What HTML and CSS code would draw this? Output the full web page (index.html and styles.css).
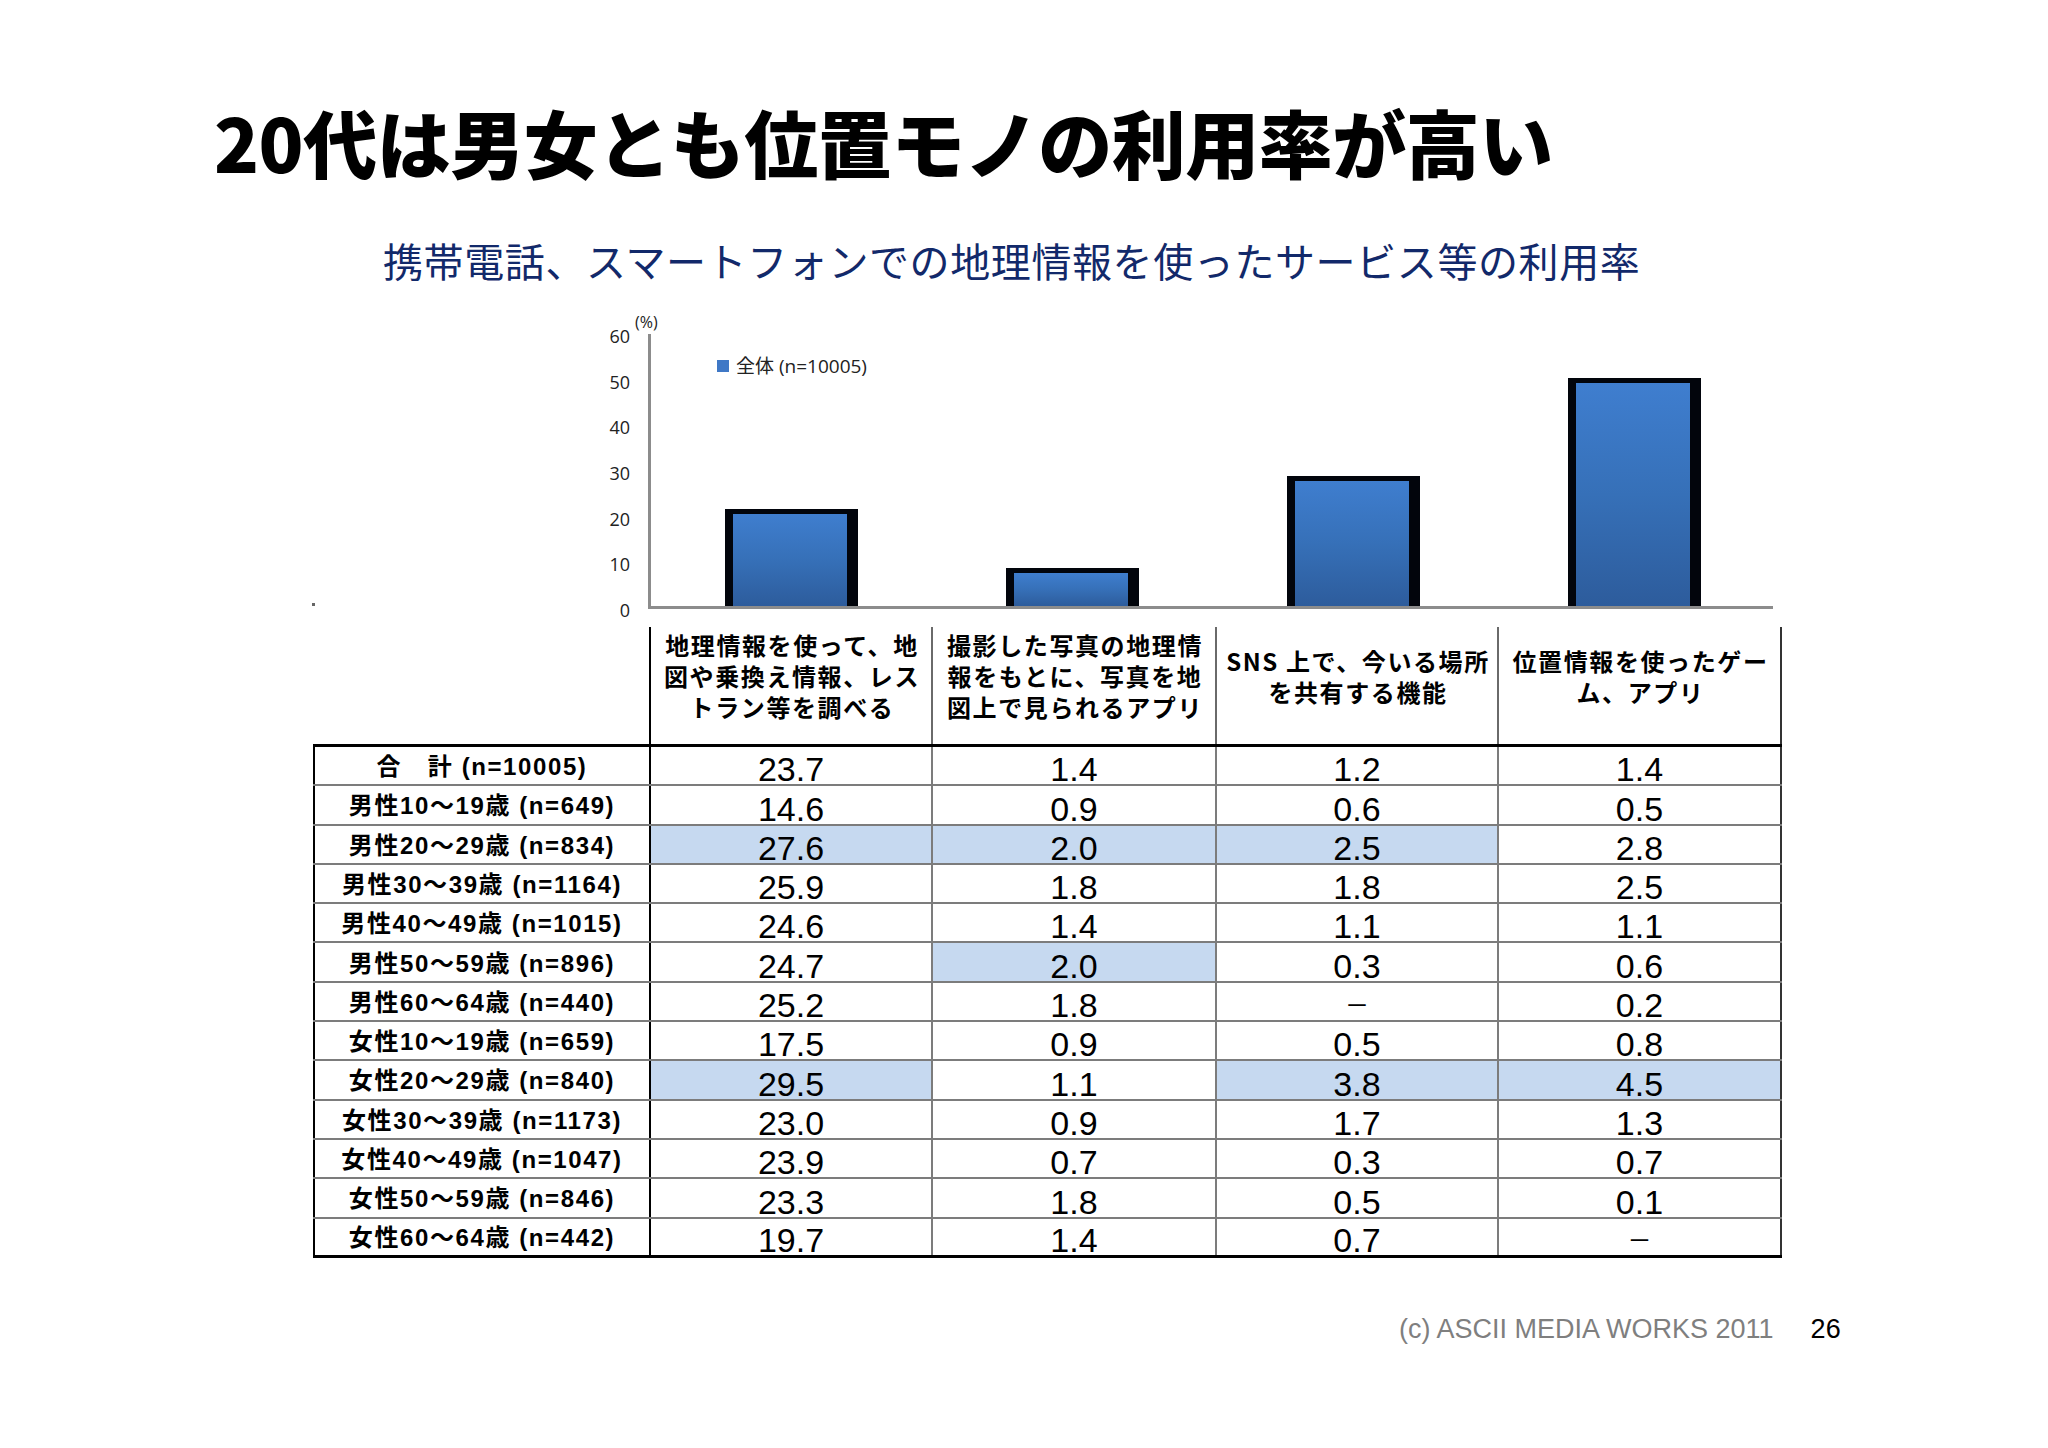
FILE: index.html
```html
<!DOCTYPE html>
<html lang="ja">
<head>
<meta charset="utf-8">
<title>20代は男女とも位置モノの利用率が高い</title>
<link rel="stylesheet" href="styles.css">
</head>
<body>
<div class="slide">
  <h1 class="title">20代は男女とも位置モノの利用率が高い</h1>
  <h2 class="subtitle">携帯電話、スマートフォンでの地理情報を使ったサービス等の利用率</h2>

  <div class="chart">
    <span class="speck"></span>
    <div class="y-labels">
      <span>60</span><span>50</span><span>40</span><span>30</span><span>20</span><span>10</span><span>0</span>
    </div>
    <div class="plot">
      <span class="unit">(%)</span>
      <div class="legend"><i class="swatch"></i><span>全体 (n=10005)</span></div>
      <div class="bars">
        <div class="slot"><div class="bar" style="height:35.7%"></div></div>
        <div class="slot"><div class="bar" style="height:14.0%"></div></div>
        <div class="slot"><div class="bar" style="height:47.8%"></div></div>
        <div class="slot"><div class="bar" style="height:83.8%"></div></div>
      </div>
    </div>
  </div>

  <table class="data">
    <colgroup>
      <col class="c-label"><col class="c-1"><col class="c-2"><col class="c-3"><col class="c-4">
    </colgroup>
    <thead>
      <tr class="head">
        <th class="blank"></th>
        <th class="h first">地理情報を使って、地<br>図や乗換え情報、レス<br>トラン等を調べる</th>
        <th class="h">撮影した写真の地理情<br>報をもとに、写真を地<br>図上で見られるアプリ</th>
        <th class="h">SNS 上で、今いる場所<br>を共有する機能</th>
        <th class="h last">位置情報を使ったゲー<br>ム、アプリ</th>
      </tr>
    </thead>
    <tbody>
      <tr><td class="label">合　計 (n=10005)</td><td class="num">23.7</td><td class="num">1.4</td><td class="num">1.2</td><td class="num last">1.4</td></tr>
      <tr><td class="label">男性10～19歳 (n=649)</td><td class="num">14.6</td><td class="num">0.9</td><td class="num">0.6</td><td class="num last">0.5</td></tr>
      <tr><td class="label">男性20～29歳 (n=834)</td><td class="num hl">27.6</td><td class="num hl">2.0</td><td class="num hl">2.5</td><td class="num last">2.8</td></tr>
      <tr><td class="label">男性30～39歳 (n=1164)</td><td class="num">25.9</td><td class="num">1.8</td><td class="num">1.8</td><td class="num last">2.5</td></tr>
      <tr><td class="label">男性40～49歳 (n=1015)</td><td class="num">24.6</td><td class="num">1.4</td><td class="num">1.1</td><td class="num last">1.1</td></tr>
      <tr><td class="label">男性50～59歳 (n=896)</td><td class="num">24.7</td><td class="num hl">2.0</td><td class="num">0.3</td><td class="num last">0.6</td></tr>
      <tr><td class="label">男性60～64歳 (n=440)</td><td class="num">25.2</td><td class="num">1.8</td><td class="num dash">－</td><td class="num last">0.2</td></tr>
      <tr><td class="label">女性10～19歳 (n=659)</td><td class="num">17.5</td><td class="num">0.9</td><td class="num">0.5</td><td class="num last">0.8</td></tr>
      <tr><td class="label">女性20～29歳 (n=840)</td><td class="num hl">29.5</td><td class="num">1.1</td><td class="num hl">3.8</td><td class="num last hl">4.5</td></tr>
      <tr><td class="label">女性30～39歳 (n=1173)</td><td class="num">23.0</td><td class="num">0.9</td><td class="num">1.7</td><td class="num last">1.3</td></tr>
      <tr><td class="label">女性40～49歳 (n=1047)</td><td class="num">23.9</td><td class="num">0.7</td><td class="num">0.3</td><td class="num last">0.7</td></tr>
      <tr><td class="label">女性50～59歳 (n=846)</td><td class="num">23.3</td><td class="num">1.8</td><td class="num">0.5</td><td class="num last">0.1</td></tr>
      <tr><td class="label">女性60～64歳 (n=442)</td><td class="num">19.7</td><td class="num">1.4</td><td class="num">0.7</td><td class="num last dash">－</td></tr>
    </tbody>
  </table>

  <footer class="footer">
    <span class="copy">(c) ASCII MEDIA WORKS 2011</span>
    <span class="page">26</span>
  </footer>
</div>
</body>
</html>
```

FILE: styles.css
```css
html, body {
  margin: 0;
  padding: 0;
  background: #ffffff;
}

.slide {
  position: relative;
  width: 2048px;
  height: 1448px;
  overflow: hidden;
  background: #ffffff;
  display: flex;
  flex-direction: column;
  align-items: flex-start;
  font-family: "Noto Sans CJK JP", sans-serif;
  color: #000;
}

.title {
  margin: 104px 0 0 214px;
  font-family: "Noto Sans CJK JP", sans-serif;
  font-weight: 900;
  font-size: 74px;
  line-height: 74px;
  letter-spacing: -0.5px;
  color: #000;
  white-space: nowrap;
}

.subtitle {
  margin: 62px 0 0 383px;
  font-family: "Noto Sans CJK JP", sans-serif;
  font-weight: 400;
  font-size: 40px;
  line-height: 40px;
  letter-spacing: 0.6px;
  color: #12296a;
  white-space: nowrap;
}

/* ---------- chart ---------- */
.chart {
  display: flex;
  align-items: flex-start;
  margin: 47px 0 0 596px;
}

.speck {
  position: absolute;
  left: 312px;
  top: 603px;
  width: 3px;
  height: 3px;
  background: #666;
}

.y-labels {
  display: flex;
  flex-direction: column;
  align-items: flex-end;
  gap: 27.67px;
  width: 34px;
  font-family: "Open Sans", sans-serif;
  font-size: 18px;
  line-height: 18px;
  color: #222;
}

.plot {
  position: relative;
  box-sizing: border-box;
  width: 1125px;
  height: 275px;
  margin: 7px 0 0 18px;
  border-left: 3px solid #8c8c8c;
  border-bottom: 3px solid #8c8c8c;
}

.unit {
  position: absolute;
  left: -16px;
  top: -21px;
  font-family: "Open Sans", sans-serif;
  font-size: 16px;
  line-height: 18px;
  color: #222;
}

.legend {
  position: absolute;
  left: 66px;
  top: 20px;
  display: flex;
  align-items: center;
  font-family: "Open Sans", "Noto Sans CJK JP", sans-serif;
  font-size: 19px;
  line-height: 24px;
  color: #222;
}

.swatch {
  display: block;
  width: 12px;
  height: 12px;
  margin-right: 7px;
  background: #3f78c6;
}

.bars {
  display: grid;
  grid-template-columns: repeat(4, 281px);
  height: 100%;
  align-items: end;
}

.slot {
  height: 100%;
  display: flex;
  align-items: flex-end;
  justify-content: center;
}

.bar {
  box-sizing: border-box;
  width: 133px;
  border-top: 5px solid #02050c;
  border-left: 8px solid #02050c;
  border-right: 11px solid #02050c;
  background: linear-gradient(180deg, #3f7ecf 0%, #3670b8 50%, #2d5c9c 100%);
}

/* ---------- table ---------- */
.data {
  margin: 8px 0 0 313px;
  border-collapse: collapse;
  table-layout: fixed;
  width: 1467px;
}

.c-label { width: 336px; }
.c-1 { width: 282px; }
.c-2 { width: 284px; }
.c-3 { width: 282px; }
.c-4 { width: 283px; }

.head {
  height: 119px;
}

.data th.blank {
  border: none;
  padding: 0;
}

.data th.h {
  border-left: 2px solid #6a6a6a;
  border-right: 2px solid #6a6a6a;
  border-top: none;
  border-bottom: 3px solid #000;
  padding: 0 0 20px 2px;
  vertical-align: middle;
  text-align: center;
  font-family: "Noto Sans CJK JP", sans-serif;
  font-weight: 700;
  font-size: 24px;
  line-height: 31px;
  letter-spacing: 1.6px;
  white-space: nowrap;
  color: #000;
}

.data th.h.first {
  border-left: 2px solid #000;
}

.data th.h.last {
  border-right: 2px solid #333;
}

.data tbody tr {
  height: 39.3px;
}

.data td {
  border: 2px solid #7c7c7c;
  padding: 0;
}

.data tbody tr:first-child td {
  border-top: 3px solid #000;
}

.data tbody tr:last-child td {
  border-bottom: 3px solid #000;
}

.data td.label {
  border-left: 2px solid #000;
  border-right: 2px solid #000;
  padding-top: 3px;
  text-align: center;
  vertical-align: middle;
  font-family: "Liberation Sans", "Noto Sans CJK JP", sans-serif;
  font-weight: 700;
  font-size: 24px;
  line-height: 28px;
  letter-spacing: 1.6px;
  white-space: nowrap;
}

.data td.num {
  text-align: center;
  vertical-align: bottom;
  font-family: "Liberation Sans", sans-serif;
  font-size: 34px;
  line-height: 29px;
  color: #000;
}

.data td.num.last {
  border-right: 2px solid #333;
}

.data td.dash {
  font-family: "Noto Sans CJK JP", sans-serif;
  font-size: 24px;
  line-height: 32px;
}

.data td.hl {
  background: #c6d9f0;
}

/* ---------- footer ---------- */
.footer {
  display: flex;
  gap: 37px;
  margin: 58px 0 0 1399px;
  font-family: "Liberation Sans", sans-serif;
  font-size: 27px;
  line-height: 26px;
}

.copy {
  color: #7f7f7f;
}

.page {
  color: #000;
}
```
